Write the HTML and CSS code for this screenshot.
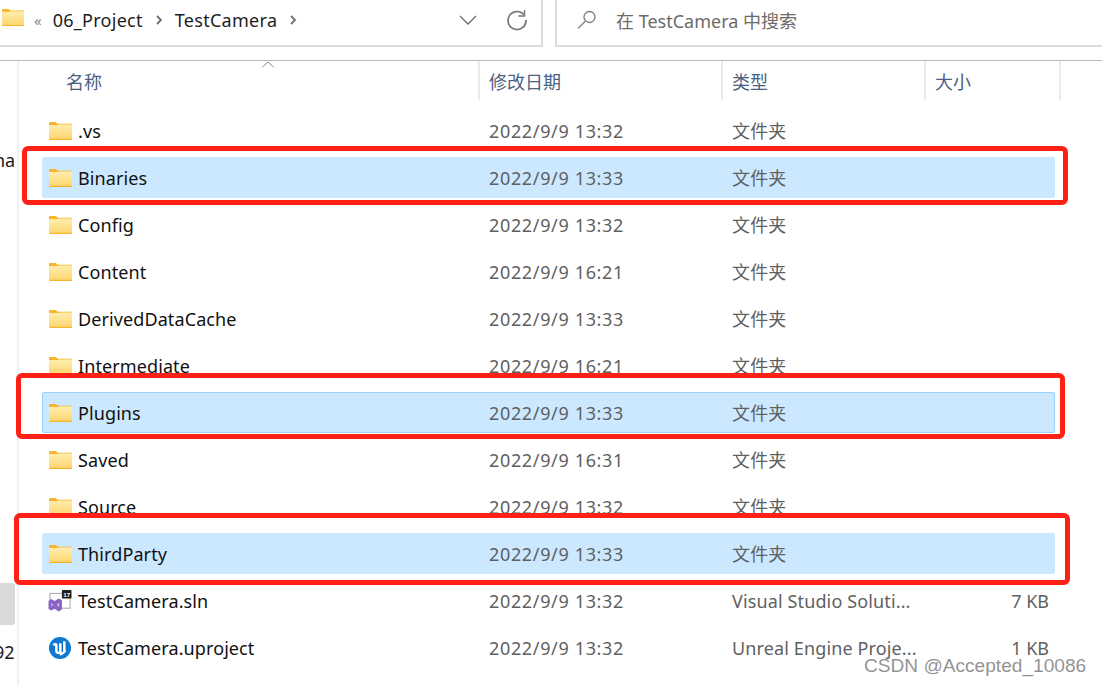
FILE: index.html
```html
<!DOCTYPE html>
<html lang="zh-CN">
<head>
<meta charset="utf-8">
<title>TestCamera</title>
<link rel="stylesheet" href="styles.css">
</head>
<body>
<svg class="defs" width="0" height="0" aria-hidden="true">
  <defs>
    <linearGradient id="fg" x1="0" y1="0" x2="0" y2="1"><stop offset="0" stop-color="#ffeeb0"/><stop offset="1" stop-color="#fdd670"/></linearGradient>
    <symbol id="folder" viewBox="0 0 22 17">
      <path d="M0 1C0 .4.4 0 1 0H6.500L8.500 1.600H22V17H1C.4 17 0 16.600 0 16Z" fill="#f7b52b"/>
      <path d="M0 2.800H8.800L9.800 2.200H22V16H0Z" fill="url(#fg)"/>
    </symbol>
  </defs>
</svg>
<header class="toolbar">
  <div class="address">
    <svg class="crumb-folder" width="22" height="17"><use href="#folder"/></svg>
    <span class="chev-double">«</span>
    <span class="crumb">06_Project</span>
    <svg class="chev" width="8" height="12" viewBox="0 0 8 12"><path d="M2 2l4 4-4 4" fill="none" stroke="#6f6f6f" stroke-width="1.800"/></svg>
    <span class="crumb">TestCamera</span>
    <svg class="chev" width="8" height="12" viewBox="0 0 8 12"><path d="M2 2l4 4-4 4" fill="none" stroke="#6f6f6f" stroke-width="1.800"/></svg>
    <span class="spacer"></span>
    <svg class="drop" width="18" height="10" viewBox="0 0 18 10"><path d="M1 1l8 8 8-8" fill="none" stroke="#6b6b6b" stroke-width="1.300"/></svg>
    <svg class="refresh" width="22" height="22" viewBox="0 0 22 22"><path d="M17.700 5.500A9 9 0 1 0 20 11" fill="none" stroke="#777" stroke-width="1.700"/><path d="M18.500 1v6h-6" fill="none" stroke="#777" stroke-width="1.500"/></svg>
  </div>
  <div class="search">
    <svg class="lens" width="20" height="20" viewBox="0 0 20 20"><circle cx="12.500" cy="7" r="5.500" fill="none" stroke="#777" stroke-width="1.300"/><path d="M8.500 11L1 18.500" stroke="#8a8a8a" stroke-width="1.400"/></svg>
    <span>在 TestCamera 中搜索</span>
  </div>
</header>
<main class="main">
  <aside class="sidebar">
    <span class="side-na">na</span>
    <span class="side-block"></span>
    <span class="side-num">92</span>
  </aside>
  <section class="pane">
    <div class="columns">
      <div class="col col-name">名称<svg class="sort" width="12" height="7" viewBox="0 0 12 7"><path d="M.5 6L6 1l5.500 5" fill="none" stroke="#8a8a8a"/></svg></div>
      <div class="col col-date">修改日期</div>
      <div class="col col-type">类型</div>
      <div class="col col-size">大小</div>
      <div class="col col-rest"></div>
    </div>
    <div class="list">
      <div class="row"><span class="name"><svg class="ico"><use href="#folder"/></svg>.vs</span><span class="date">2022/9/9 13:32</span><span class="type">文件夹</span></div>
      <div class="row sel"><span class="name"><svg class="ico"><use href="#folder"/></svg>Binaries</span><span class="date">2022/9/9 13:33</span><span class="type">文件夹</span></div>
      <div class="row"><span class="name"><svg class="ico"><use href="#folder"/></svg>Config</span><span class="date">2022/9/9 13:32</span><span class="type">文件夹</span></div>
      <div class="row"><span class="name"><svg class="ico"><use href="#folder"/></svg>Content</span><span class="date">2022/9/9 16:21</span><span class="type">文件夹</span></div>
      <div class="row"><span class="name"><svg class="ico"><use href="#folder"/></svg>DerivedDataCache</span><span class="date">2022/9/9 13:33</span><span class="type">文件夹</span></div>
      <div class="row"><span class="name"><svg class="ico"><use href="#folder"/></svg>Intermediate</span><span class="date">2022/9/9 16:21</span><span class="type">文件夹</span></div>
      <div class="row sel focus"><span class="name"><svg class="ico"><use href="#folder"/></svg>Plugins</span><span class="date">2022/9/9 13:33</span><span class="type">文件夹</span></div>
      <div class="row"><span class="name"><svg class="ico"><use href="#folder"/></svg>Saved</span><span class="date">2022/9/9 16:31</span><span class="type">文件夹</span></div>
      <div class="row"><span class="name"><svg class="ico"><use href="#folder"/></svg>Source</span><span class="date">2022/9/9 13:32</span><span class="type">文件夹</span></div>
      <div class="row sel"><span class="name"><svg class="ico"><use href="#folder"/></svg>ThirdParty</span><span class="date">2022/9/9 13:33</span><span class="type">文件夹</span></div>
      <div class="row"><span class="name"><svg class="ico ico-wide" viewBox="0 0 24 23"><rect x="1.500" y="3.500" width="21" height="15.500" fill="#fff" stroke="#a3a3a3"/><path d="M0 11.500L2.500 9.500 6.500 11.500 10.500 9 14 10.500V20.500L10.500 22.500 6.500 19.500 2.500 21.500 0 19.500Z" fill="#8a63c8"/><path d="M3 13.500v4l2-2ZM11 13l-2.500 2.500L11 18Z" fill="#cdb9ea"/><rect x="14" y="0" width="10" height="9" rx="1" fill="#1d1d1d"/><text x="19" y="7" class="badge">17</text></svg>TestCamera.sln</span><span class="date">2022/9/9 13:32</span><span class="type">Visual Studio Soluti...</span><span class="size">7 KB</span></div>
      <div class="row"><span class="name"><svg class="ico ico-wide" viewBox="0 0 24 23"><circle cx="12" cy="11.500" r="11.500" fill="#0f78d0"/><path d="M5 8.500c1.800-1.600 3.200-1 3.200.5v5c0 3 3.400 3.400 5 1.500" fill="none" stroke="#fff" stroke-width="2.600"/><path d="M12.300 6.500V17M16.500 4.500V15.500" fill="none" stroke="#fff" stroke-width="2.600"/><path d="M11 8l2.600-2.200M15.200 6l2.600-2.800M12 19.500c2.500-.8 5-2.500 7-5.500l-3.500 1-3.500 2.500Z" fill="#fff"/></svg>TestCamera.uproject</span><span class="date">2022/9/9 13:32</span><span class="type">Unreal Engine Proje...</span><span class="size">1 KB</span></div>
    </div>
    <div class="frame frame-a"></div>
    <div class="frame frame-b"></div>
    <div class="frame frame-c"></div>
  </section>
</main>
<div class="watermark">CSDN @Accepted_10086</div>
</body>
</html>
```

FILE: styles.css
```css
* { box-sizing: border-box; }
html, body { margin: 0; padding: 0; }
body {
  width: 1102px;
  height: 685px;
  overflow: hidden;
  position: relative;
  background: #fff;
  font-family: "Noto Sans", "Noto Sans CJK SC", sans-serif;
  font-size: 18px;
  color: #1a1a1a;
}
.defs { position: absolute; }

.toolbar {
  height: 61px;
  display: flex;
  border-bottom: 1px solid #bababa;
  padding-bottom: 13px;
}
.address {
  width: 543px;
  display: flex;
  align-items: center;
  border-right: 2px solid #dcdcdc;
  border-bottom: 2px solid #dcdcdc;
  padding: 0 13px 5px 0;
}
.crumb-folder { margin: 0 10px 6px 2px; flex: none; }
.chev-double { color: #8a8a8a; font-size: 15px; margin-right: 11px; }
.crumb { color: #1e1e1e; letter-spacing: .28px; }
.chev { margin: 0 12px 0 12px; }
.spacer { flex: 1; }
.drop { margin-right: 29px; }
.search {
  margin-left: 12px;
  flex: 1;
  display: flex;
  align-items: center;
  border-left: 2px solid #dcdcdc;
  border-bottom: 2px solid #dcdcdc;
  padding: 0 0 5px 20px;
  color: #6b6b6b;
}
.lens { margin-right: 19px; }

.main { display: flex; height: 624px; }
.sidebar {
  width: 19px;
  flex: none;
  border-right: 2px solid #f1f1f1;
  position: relative;
  overflow: hidden;
}
.side-na { position: absolute; left: -6px; top: 87px; white-space: nowrap; }
.side-block { position: absolute; left: 0; top: 522px; width: 15px; height: 42px; background: #d9d9d9; border-radius: 0 3px 3px 0; }
.side-num { position: absolute; left: -6px; top: 579px; }

.pane { flex: 1; position: relative; min-width: 0; }
.columns {
  height: 39px;
  display: flex;
  color: #4a6180;
}
.col { padding: 0 0 0 9px; border-right: 2px solid #ebebeb; display: flex; align-items: center; position: relative; }
.col-name { width: 461px; padding-left: 47px; }
.col-date { width: 243px; }
.col-type { width: 203px; }
.col-size { width: 135px; }
.col-rest { border-right: 0; }
.sort { position: absolute; left: 243px; top: 0; }

.list {
  display: flex;
  flex-direction: column;
  gap: 6px;
  padding: 10px 0 0 23px;
}
.row {
  position: relative;
  width: 1013px;
  height: 41px;
  flex: none;
  display: grid;
  grid-template-columns: 446px 243px 1fr;
  align-items: center;
  border: 1px solid transparent;
  border-radius: 2px;
  padding-top: 2px;
  line-height: 37px;
  white-space: nowrap;
}
.sel { background: #cce8ff; z-index: 2; }
.focus { border-color: #99d1ff; }
.name { display: flex; align-items: center; color: #111; padding-left: 6px; letter-spacing: .1px; }
.ico { width: 23px; height: 22px; margin: -2px 6px 0 0; flex: none; }
.ico-wide { width: 24px; margin-left: -1px; }
.date, .type, .size { color: #5f5f5f; }
.date { letter-spacing: .65px; }
.type { letter-spacing: .13px; }
.size { position: absolute; right: 5px; top: 2px; }
.badge { font: 700 6.500px "Liberation Sans", sans-serif; fill: #fff; text-anchor: middle; }

.frame {
  position: absolute;
  z-index: 1;
  background: #fff;
  border: 5px solid #ff2016;
  border-radius: 6px;
}
.frame-a { left: 3px; top: 85px; width: 1046px; height: 59px; }
.frame-b { left: -3px; top: 312px; width: 1049px; height: 66px; }
.frame-c { left: -5px; top: 452px; width: 1056px; height: 72px; }

.watermark {
  position: absolute;
  left: 864px;
  top: 655px;
  font: 19.100px "Liberation Sans", sans-serif;
  color: rgba(110, 110, 110, .75);
  white-space: nowrap;
  z-index: 3;
}
```
